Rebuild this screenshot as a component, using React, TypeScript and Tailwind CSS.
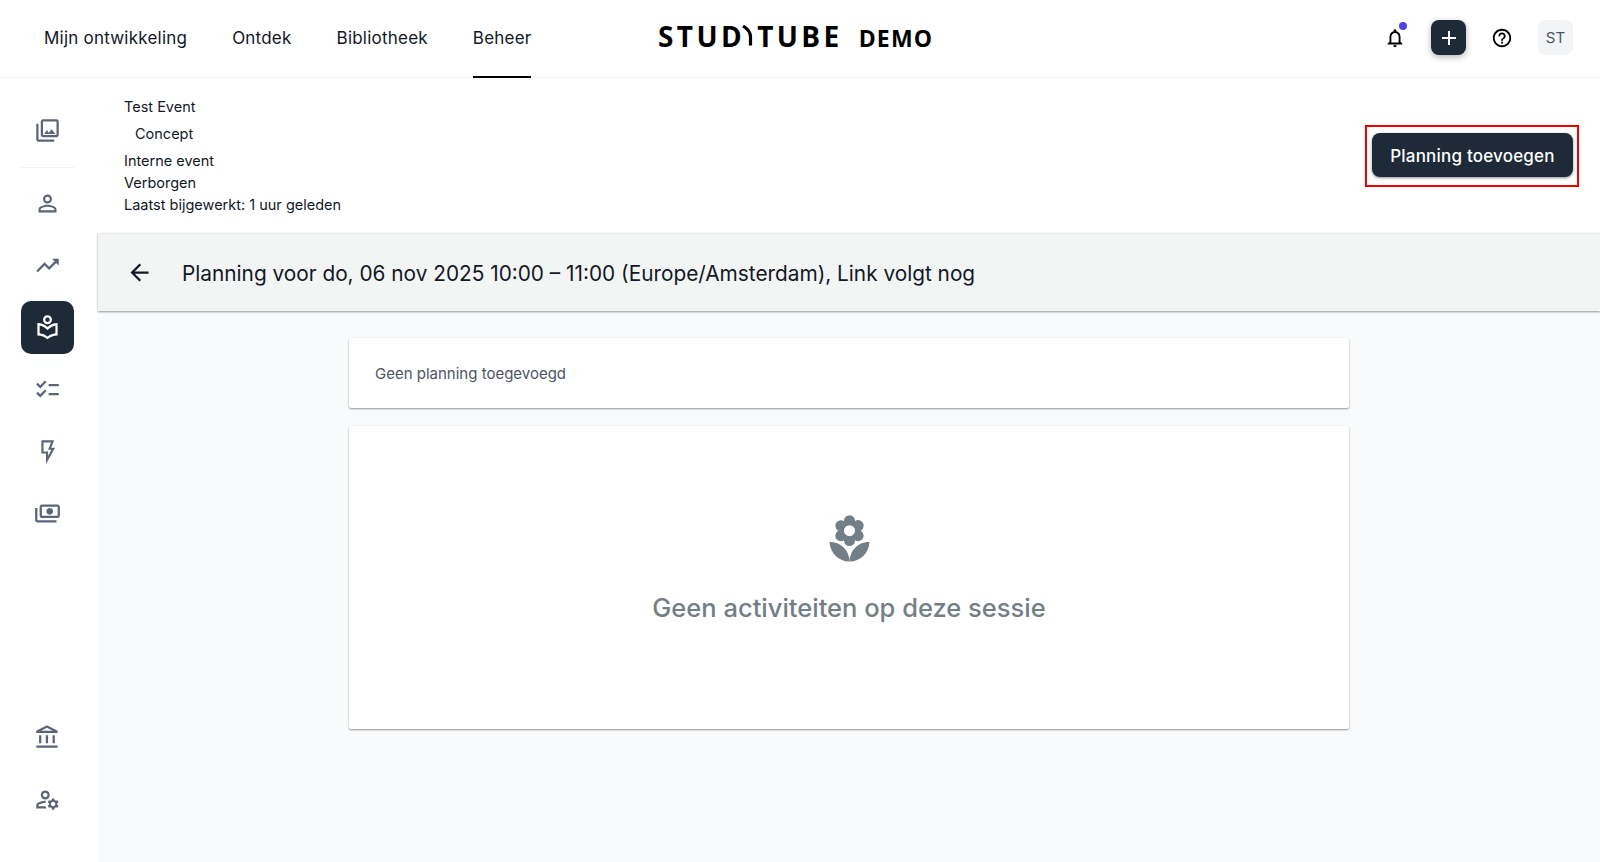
import React from 'react';
import {
  MdAdd,
  MdArrowBack,
  MdHelpOutline,
  MdLocalFlorist,
  MdOutlineAccountBalance,
  MdOutlineChecklist,
  MdOutlineLocalLibrary,
  MdOutlineManageAccounts,
  MdOutlineNotifications,
  MdOutlinePayments,
  MdOutlinePersonOutline,
  MdOutlinePhotoLibrary,
  MdTrendingUp,
} from 'react-icons/md';

type IconProps = { size?: number; className?: string };

const navItems = [
  { label: 'Mijn ontwikkeling' },
  { label: 'Ontdek' },
  { label: 'Bibliotheek' },
  { label: 'Beheer', active: true },
];

// outlined bolt, the icon package only has a filled one at this weight
const BoltIcon = ({ size = 27 }: IconProps) => (
  <svg width={size} height={size} viewBox="0 0 24 24" fill="none" stroke="currentColor" strokeWidth="1.9">
    <path d="M7.5 3h9l-2.6 6.6h3.2L11.6 19.5v-6.6H7.5z" strokeLinejoin="miter" />
  </svg>
);

const FlippedPayments = ({ size = 27 }: IconProps) => <MdOutlinePayments size={size} className="-scale-x-100" />;

const SideButton = ({ icon: Icon, active }: { icon: React.ComponentType<IconProps>; active?: boolean }) => (
  <div
    className={`w-[53px] h-[53px] rounded-[10px] flex items-center justify-center ${
      active ? 'bg-[#1e2a38] text-white' : 'text-[#5b6478]'
    }`}
  >
    <Icon size={27} />
  </div>
);

const Logo = () => (
  <div className="flex items-baseline self-center mb-[6px] text-black leading-none font-['Open_Sans',sans-serif] font-bold">
    <span className="flex items-center text-[28px] tracking-[3.4px]">
      STUD
      <svg width="12" height="21" viewBox="0 0 12 21" className="-ml-[3px] mr-[3px]">
        <path d="M1 1 C6 4 8.5 7.5 8.5 12 V20.5" fill="none" stroke="currentColor" strokeWidth="3.2" />
      </svg>
      TUBE
    </span>
    <span className="ml-[16px] text-[23px] tracking-[1.2px]">DEMO</span>
  </div>
);

const Header = () => (
  <header className="h-[78px] shrink-0 bg-white border-b border-[#f1f2f3] flex items-stretch pl-[44px] pr-[27px] relative">
    <nav className="flex gap-[45px] w-[614px] text-[17px] tracking-[0.22px] text-[#111827]">
      {navItems.map((item) => (
        <div
          key={item.label}
          className={`h-[78px] flex items-center pt-[1px] border-b-2 ${item.active ? 'border-black' : 'border-transparent'}`}
        >
          {item.label}
        </div>
      ))}
    </nav>
    <Logo />
    <div className="ml-auto flex items-center pb-[2px]">
      <div className="relative text-black mr-[25px]">
        <MdOutlineNotifications size={22} />
        <span className="absolute -top-[5px] right-[-1px] w-2 h-2 rounded-full bg-[#4f46e5]" />
      </div>
      <div className="w-[35px] h-[35px] rounded-[8px] bg-[#1e2a38] text-white flex items-center justify-center shadow-[0_2px_6px_rgba(0,0,0,0.3)] mr-[25px]">
        <MdAdd size={24} />
      </div>
      <div className="text-black mr-[25px]">
        <MdHelpOutline size={22} />
      </div>
      <div className="w-[35px] h-[35px] pt-[1px] rounded-[8px] bg-[#f3f4f6] text-[#4b5563] text-[15px] flex items-center justify-center">
        ST
      </div>
    </div>
  </header>
);

const Sidebar = () => (
  <aside className="w-[98px] shrink-0 bg-white flex flex-col items-start pl-[21px] pt-[26px] pb-[36px]">
    <SideButton icon={MdOutlinePhotoLibrary} />
    <div className="w-[53px] border-t border-[#f1f2f3] mt-[10px] mb-[9px]" />
    <div className="flex flex-col gap-[9px]">
      <SideButton icon={MdOutlinePersonOutline} />
      <SideButton icon={MdTrendingUp} />
      <SideButton icon={MdOutlineLocalLibrary} active />
      <SideButton icon={MdOutlineChecklist} />
      <SideButton icon={BoltIcon} />
      <SideButton icon={FlippedPayments} />
    </div>
    <div className="mt-auto flex flex-col gap-[9px]">
      <SideButton icon={MdOutlineAccountBalance} />
      <SideButton icon={MdOutlineManageAccounts} />
    </div>
  </aside>
);

export default function App() {
  return (
    <div className="h-[862px] w-[1600px] flex flex-col overflow-hidden bg-white font-['Inter',sans-serif]">
      <Header />
      <div className="flex-1 flex min-h-0">
        <Sidebar />
        <main className="flex-1 flex flex-col bg-[#f9fafb] min-w-0">
          {/* Event info */}
          <div className="h-[155px] bg-white flex items-center justify-between pl-[26px] pr-[21px] text-[14.5px] text-[#111827]">
            <div className="flex flex-col self-start pt-[18px]">
              <div className="leading-[22px]">Test Event</div>
              <div className="leading-[22px] pl-[11px] mt-[5px] mb-[5px]">Concept</div>
              <div className="leading-[22px]">Interne event</div>
              <div className="leading-[22px]">Verborgen</div>
              <div className="leading-[22px]">Laatst bijgewerkt: 1 uur geleden</div>
            </div>
            <div className="border-2 border-[#f00000] pl-[5px] pr-[4px] pt-[6px] pb-[8px]">
              <button className="h-[44px] w-[201px] pt-[4px] rounded-[8px] bg-[#1e2a38] text-white text-[17px] tracking-[0.2px] font-medium shadow-[0_1px_3px_rgba(0,0,0,0.45)]">
                Planning toevoegen
              </button>
            </div>
          </div>

          {/* Session bar */}
          <div className="h-[78px] bg-[#f3f5f4] border-t border-[#e9ebec] shadow-[0_1px_2px_rgba(0,0,0,0.4)] flex items-center pl-[28px] text-[#111827]">
            <MdArrowBack size={27} className="mr-[29px]" />
            <span className="pt-[3px] text-[20.8px]">Planning voor do, 06 nov 2025 10:00 – 11:00 (Europe/Amsterdam), Link volgt nog</span>
          </div>

          {/* Planning */}
          <div className="flex-1 flex flex-col items-center pt-[27px] gap-[18px]">
            <div className="w-[1000px] h-[70px] bg-white rounded-[2px] shadow-[0_1px_2px_rgba(0,0,0,0.4)] flex items-center px-[26px] pt-[3px] text-[15px] text-[#4b5563]">
              Geen planning toegevoegd
            </div>
            <div className="w-[1000px] h-[303px] bg-white rounded-[2px] shadow-[0_1px_2px_rgba(0,0,0,0.4)] flex flex-col items-center pt-[87px] text-[#737f87]">
              <MdLocalFlorist size={53} />
              <div className="mt-[26px] text-[25.5px] leading-[32px] font-medium">Geen activiteiten op deze sessie</div>
            </div>
          </div>
        </main>
      </div>
    </div>
  );
}
